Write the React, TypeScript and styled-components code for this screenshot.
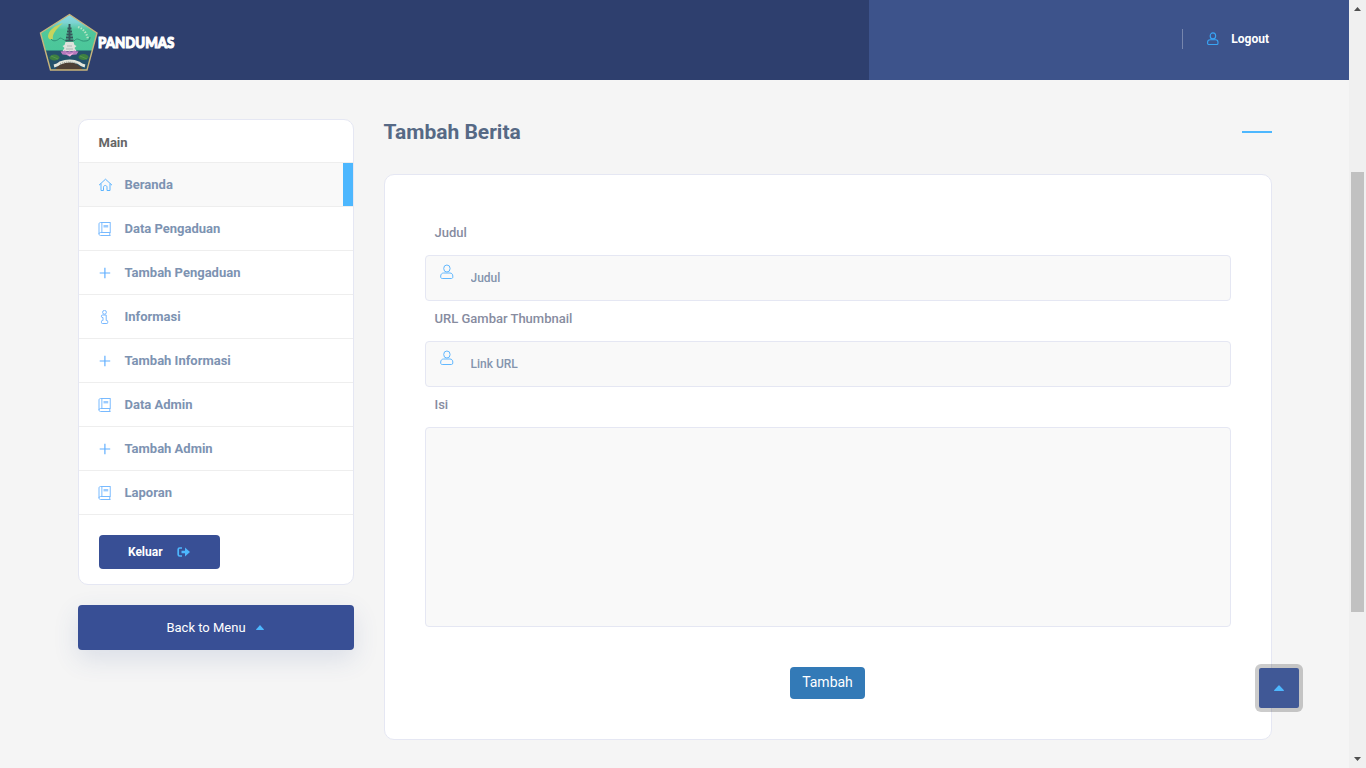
import React from 'react';
import styled, { createGlobalStyle, css } from 'styled-components';

const GlobalStyle = createGlobalStyle`
  *, *::before, *::after { box-sizing: border-box; }
  body {
    margin: 0;
    overflow: hidden;
    background: #f5f5f5;
    font-family: Roboto, "Liberation Sans", sans-serif;
  }
`;

const ACCENT = '#4db7fe';

const Shell = styled.div`
  display: flex;
  width: 1366px;
  height: 768px;
  overflow: hidden;
`;

const Page = styled.div`
  position: relative;
  flex: 1;
  min-width: 0;
  background: #f5f5f5;
`;

const Header = styled.header`
  display: flex;
  height: 80px;
  background: #2e3f6e;
`;

const Brand = styled.div`
  display: flex;
  align-items: flex-start;
  width: 869px;
  padding: 13px 0 0 39px;
`;

const Wordmark = styled.span`
  margin: 19px 0 0 -1px;
  color: #fff;
  font: 900 15.5px/20px Lato, Roboto, sans-serif;
  -webkit-text-stroke: 1.1px #fff;
  transform: scaleX(0.855);
  transform-origin: left;
`;

const AccountBar = styled.div`
  display: flex;
  flex: 1;
  align-items: center;
  justify-content: flex-end;
  padding: 0 80px 2px 0;
  background: #3d538b;
`;

const LogoutLink = styled.a`
  display: flex;
  align-items: center;
  height: 20px;
  padding-left: 23.5px;
  border-left: 1px solid #7786ad;
  color: #fff;
  font-size: 12px;
  font-weight: 700;

  svg { margin: -1px 12.5px 0 0; }
`;

const Content = styled.div`
  display: flex;
  gap: 30px;
  padding: 39px 77px 0 78px;
`;

const Sidebar = styled.aside`
  display: flex;
  flex-direction: column;
  gap: 20px;
  width: 276px;
`;

const MenuCard = styled.nav`
  height: 466px;
  overflow: hidden;
  background: #fff;
  border: 1px solid #e5e7f3;
  border-radius: 10px;
`;

const MenuTitle = styled.div`
  height: 43px;
  padding-left: 19.5px;
  border-bottom: 1px solid #eee;
  color: #666;
  font-size: 13px;
  font-weight: 700;
  line-height: 45px;
`;

const MenuItem = styled.a<{ $active?: boolean }>`
  display: flex;
  align-items: center;
  height: 44px;
  padding-left: 19px;
  border-bottom: 1px solid #eee;
  color: #7d93b2;
  font-size: 13px;
  font-weight: 700;

  ${({ $active }) =>
    $active &&
    css`
      background: #f9f9f9;
      background-image: linear-gradient(${ACCENT}, ${ACCENT});
      background-size: 10px 100%;
      background-position: right;
      background-repeat: no-repeat;
    `}
`;

const MenuIcon = styled.span`
  display: flex;
  align-items: center;
  justify-content: center;
  width: 14px;
  height: 14px;
  margin: 1px 12.5px 0 0;
`;

const LeaveButton = styled.button`
  display: flex;
  align-items: center;
  justify-content: center;
  gap: 14.5px;
  width: 121px;
  height: 34px;
  margin: 20px 0 0 20px;
  padding: 0 1px 0 0;
  border: 0;
  border-radius: 4px;
  background: #384f95;
  color: #fff;
  font: 700 12px Roboto, sans-serif;
`;

const BackButton = styled.button`
  display: flex;
  align-items: center;
  justify-content: center;
  gap: 10px;
  width: 276px;
  height: 45px;
  padding: 0 2px 0 0;
  border: 0;
  border-radius: 4px;
  background: #384f95;
  box-shadow: 0 9px 26px rgba(58, 87, 149, 0.14);
  color: #fff;
  font: 400 13px Roboto, sans-serif;
`;

const Main = styled.main`
  flex: 1;
`;

const Heading = styled.div`
  display: flex;
  align-items: center;
  justify-content: space-between;
  height: 26px;
  margin-bottom: 29px;

  &::after {
    content: '';
    width: 30px;
    height: 2px;
    background: ${ACCENT};
  }
`;

const Title = styled.h1`
  margin: 0 0 0 -0.5px;
  color: #566985;
  font-size: 21px;
  font-weight: 700;
  line-height: 26px;
`;

const Panel = styled.form`
  display: flex;
  flex-direction: column;
  height: 566px;
  padding: 40px 40px 0;
  background: #fff;
  border: 1px solid #e5e7f3;
  border-radius: 10px;
`;

const FieldLabel = styled.label`
  height: 40px;
  padding-left: 9.5px;
  color: #878c9f;
  font-size: 13px;
  font-weight: 500;
  line-height: 35px;
`;

const field = css`
  border: 1px solid #e5e7f3;
  border-radius: 4px;
  background: #f9f9f9;
`;

const InputBox = styled.div`
  ${field}
  display: flex;
  align-items: flex-start;
  height: 46px;
  padding: 8px 0 0 14px;
`;

const Input = styled.input`
  flex: 1;
  height: 28px;
  margin-left: 16.5px;
  padding: 0;
  border: 0;
  outline: 0;
  background: transparent;
  font: 500 12px Roboto, sans-serif;

  &::placeholder { color: #8494ad; opacity: 1; }
`;

const TextArea = styled.textarea`
  ${field}
  display: block;
  height: 200px;
  resize: none;
  outline: 0;
`;

const SubmitButton = styled.button`
  align-self: center;
  width: 75px;
  height: 32px;
  margin: 40px 1px 0 0;
  padding: 0 0 2px;
  border: 0;
  border-radius: 4px;
  background: #337ab7;
  color: #fff;
  font: 400 14px Roboto, sans-serif;
`;

const ScrollTop = styled.button`
  position: absolute;
  right: 46px;
  bottom: 56px;
  display: flex;
  align-items: center;
  justify-content: center;
  width: 48px;
  height: 48px;
  padding: 0;
  border: 4px solid rgba(0, 0, 0, 0.2);
  border-radius: 6px;
  background: #405896;
  background-clip: padding-box;
`;

const ScrollTrack = styled.div`
  display: flex;
  flex-direction: column;
  align-items: center;
  width: 17px;
  height: 768px;
  background: #f0f0f0;
`;

const ScrollArrow = styled.span<{ $down?: boolean }>`
  display: flex;
  align-items: center;
  justify-content: center;
  height: 17px;
  transform: ${({ $down }) => ($down ? 'rotate(180deg)' : 'none')};
`;

const ScrollThumb = styled.div`
  width: 13px;
  height: 440px;
  margin: 155px 0 139px;
  background: #c1c1c1;
`;

const UserIcon = ({ size = 14, weight = 1 }: { size?: number; weight?: number }) => (
  <svg width={size} height={size + 1} viewBox="0 0 14 15" fill="none" stroke={weight > 1 ? '#39a5f5' : '#62b8ff'} strokeWidth={weight}>
    <ellipse cx="6.900" cy="4.500" rx="3.200" ry="3.500" />
    <path d="M3.700 9h6.300c1.700 0 2.800 1.300 2.800 3v1c0 .9-.5 1.500-1.400 1.500H2.200C1.200 14.500.7 13.900.7 13v-1c0-1.700 1.200-3 3-3z" />
  </svg>
);

const HomeIcon = () => (
  <svg width="14" height="14" viewBox="0 0 14 14" fill="none" stroke="#5eb5ff" strokeWidth="1" overflow="visible">
    <path d="M1 7.200 7.500 1.200 14 7.200M3 5.500V12.500h2.500V9.200c0-2.300 3.500-2.300 3.500 0v3.300h3V5.500" />
  </svg>
);

const BookIcon = () => (
  <svg width="14" height="14" viewBox="0 0 14 14" fill="none" stroke="#78baff" strokeWidth="1">
    <path d="M12.500 10.500H2.500c-1.100 0-1.500.7-1.500 1.500s.5 1.500 1.500 1.500h10M12.500.500H2.500C1.500.500 1 1.200 1 2v10" />
    <path d="M12.300.500v10M11.700 10.500v3" opacity=".75" strokeWidth="1.300" />
    <path d="M3.800.500v10" opacity=".65" strokeWidth="1.500" />
    <path d="M5.500 4.200h4.700" strokeWidth="2.400" opacity=".75" />
  </svg>
);

const PlusIcon = () => (
  <svg width="14" height="14" viewBox="0 0 14 14" stroke="#62b0ff" strokeWidth="1.200">
    <path d="M6.900 1.800v10.400M1.700 7h10.500" />
  </svg>
);

const InfoIcon = () => (
  <svg width="14" height="14" viewBox="0 0 14 14" fill="none" stroke="#78b8ff" strokeWidth="1">
    <circle cx="6.500" cy="2.300" r="1.900" />
    <path d="M4 5h4.200v5.500h.7c.5 0 .8.3.8.8v1.400c0 .5-.3.800-.8.800H4.300c-.5 0-.8-.3-.8-.8v-1.400c0-.5.3-.8.800-.800H5V7.500H4c-.8 0-.8-2.500 0-2.500z" strokeLinejoin="round" />
  </svg>
);

const LeaveIcon = () => (
  <svg width="13" height="10" viewBox="0 0 13 10" fill="none" stroke={ACCENT} strokeWidth="1.700">
    <path d="M5 1H2.700Q1.200 1 1.200 2.500v5Q1.200 9 2.700 9H5" />
    <path d="M4.500 5H10" strokeWidth="2.600" />
    <path d="M8 .6 13 5 8 9.400z" fill={ACCENT} stroke="none" />
  </svg>
);

const CaretUp = ({ width, height }: { width: number; height: number }) => (
  <svg width={width} height={height} viewBox="0 0 10 6" preserveAspectRatio="none" fill={ACCENT}>
    <path d="M.5 6Q-.3 5.700.3 5L4.500.500Q5 0 5.500.500L9.700 5Q10.300 5.700 9.500 6z" />
  </svg>
);

const ArrowGlyph = () => (
  <svg width="7" height="4" viewBox="0 0 7 4" fill="#505050">
    <path d="M0 4 3.500 0 7 4z" />
  </svg>
);

const Crest = () => (
  <svg width="60" height="60" viewBox="0 0 60 60">
    <defs>
      <linearGradient id="sky" x1="0" y1="0" x2="0" y2="1">
        <stop offset="0" stopColor="#8edbed" />
        <stop offset=".16" stopColor="#7dd3d2" />
        <stop offset=".28" stopColor="#50c89c" />
        <stop offset="1" stopColor="#45c497" />
      </linearGradient>
      <clipPath id="shield">
        <path d="M30.500 1.500 58 20 48 57H11.500L1.500 20z" />
      </clipPath>
    </defs>
    <g clipPath="url(#shield)">
      <path d="M0 0h60v60H0z" fill="url(#sky)" />
      <path d="M0 37.500h60V60H0z" fill="#25516b" />
      <path d="M24 10C15 13 10 17 9 23c0 3 2 4 5 3-1-4 2-9 10-16z" fill="#c6d45d" />
      <path d="M12 26c2 3 6 2 9-1 2 0 3 2 7 3M35 28c4-5 6 1 11 0 3 0 5-1 5-4" fill="none" stroke="#319277" strokeWidth="1" />
      <path d="M39 14c6 2 9 7 10 12" fill="none" stroke="#b5e4c3" strokeWidth="2.200" strokeDasharray="1.500 1.300" />
      <path d="M30.500 11v16M28.500 15.500h4M28 18.500h5M27.500 21.500h6M27 24.500h7M26.500 27.500h8" fill="none" stroke="#35545a" strokeWidth="1.900" />
      <path d="M26.500 29h8l1 3 2 1-2 2 2 3h-14l2-3-2-2 2-1z" fill="#dfe2dc" />
      <path d="M28 33h5M27 36h7" stroke="#9eafac" strokeWidth=".8" />
      <path d="M21.500 38.500q3 0 4-1 4 2 5 0 1 2 5 0 1 1 4 1l-2 3-5 .500-2 1.500-3-1.500-4-.500z" fill="#b879bd" />
      <path d="m26 39.500 4 2 5-2-4 4z" fill="#f0b3dc" />
      <ellipse cx="15.500" cy="44.500" rx="5" ry="3" fill="#3e8040" />
      <ellipse cx="44.500" cy="44" rx="5" ry="3" fill="#3e8040" />
      <path d="m12 43 7 3m22-3 7 3" stroke="#55964b" strokeWidth="1" />
      <path d="M17 55q12-12 26 0v3H17z" fill="#4e4036" />
      <path d="M15 53q4-1 6-3 10-4 19 0 2 2 6 3" fill="none" stroke="#e5e6dc" strokeWidth="3" />
      <path d="M21 51q9-4 18 0" fill="none" stroke="#717770" strokeWidth=".8" strokeDasharray="1 1" />
    </g>
    <path d="M30.500 1.500 58 20 48 57H11.500L1.500 20z" fill="none" stroke="#c8b47c" strokeWidth="1.400" />
  </svg>
);

const menu = [
  { label: 'Beranda', Icon: HomeIcon },
  { label: 'Data Pengaduan', Icon: BookIcon },
  { label: 'Tambah Pengaduan', Icon: PlusIcon },
  { label: 'Informasi', Icon: InfoIcon },
  { label: 'Tambah Informasi', Icon: PlusIcon },
  { label: 'Data Admin', Icon: BookIcon },
  { label: 'Tambah Admin', Icon: PlusIcon },
  { label: 'Laporan', Icon: BookIcon },
];

export default function App() {
  return (
    <Shell>
      <GlobalStyle />
      <Page>
        <Header>
          <Brand><Crest /><Wordmark>PANDUMAS</Wordmark></Brand>
          <AccountBar>
            <LogoutLink><UserIcon size={12} weight={1.3} />Logout</LogoutLink>
          </AccountBar>
        </Header>
        <Content>
          <Sidebar>
            <MenuCard>
              <MenuTitle>Main</MenuTitle>
              {menu.map(({ label, Icon }, index) => (
                <MenuItem key={label} $active={index === 0}>
                  <MenuIcon><Icon /></MenuIcon>
                  {label}
                </MenuItem>
              ))}
              <LeaveButton type="button">Keluar<LeaveIcon /></LeaveButton>
            </MenuCard>
            <BackButton type="button">Back to Menu<CaretUp width={8} height={5} /></BackButton>
          </Sidebar>
          <Main>
            <Heading><Title>Tambah Berita</Title></Heading>
            <Panel>
              <FieldLabel htmlFor="judul">Judul</FieldLabel>
              <InputBox><UserIcon /><Input id="judul" placeholder="Judul" /></InputBox>
              <FieldLabel htmlFor="thumbnail">URL Gambar Thumbnail</FieldLabel>
              <InputBox><UserIcon /><Input id="thumbnail" placeholder="Link URL" /></InputBox>
              <FieldLabel htmlFor="isi">Isi</FieldLabel>
              <TextArea id="isi" />
              <SubmitButton type="button">Tambah</SubmitButton>
            </Panel>
          </Main>
        </Content>
        <ScrollTop type="button" aria-label="Scroll to top"><CaretUp width={10} height={6} /></ScrollTop>
      </Page>
      <ScrollTrack>
        <ScrollArrow><ArrowGlyph /></ScrollArrow>
        <ScrollThumb />
        <ScrollArrow $down><ArrowGlyph /></ScrollArrow>
      </ScrollTrack>
    </Shell>
  );
}
